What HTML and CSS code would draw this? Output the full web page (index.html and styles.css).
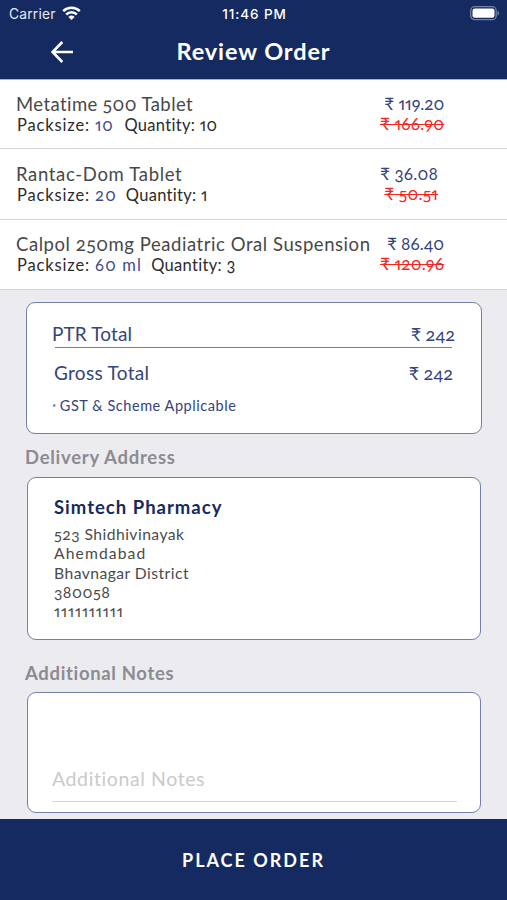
FILE: index.html
```html
<!DOCTYPE html>
<html lang="en">
<head>
<meta charset="utf-8">
<title>Review Order</title>
<link rel="stylesheet" href="styles.css">
</head>
<body>
<div class="screen">
  <header class="header">
    <div class="status">
      <div class="carrier"><span>Carrier</span>
        <svg class="wifi" width="19" height="15" viewBox="0 0 19 15" fill="none" stroke="#fff" stroke-width="2.5"><path d="M1.2 5.1a11.9 11.9 0 0 1 16.6 0M4.2 8.5a7.6 7.6 0 0 1 10.6 0"/><path d="M9.5 14 6.4 10.900a4.400 4.400 0 0 1 6.200 0Z" fill="#fff" stroke="none"/></svg>
      </div>
      <span class="time">11:46 PM</span>
      <svg class="battery" width="31" height="15" viewBox="0 0 31 15"><rect x="1.700" y=".7" width="25.500" height="13" rx="4" fill="none" stroke="#7681a3" stroke-width="1.3"/><rect x="3.500" y="2.600" width="22" height="9.200" rx="2.200" fill="#fff"/><path d="M28.500 5c2 .5 2 4 0 4.500Z" fill="#7681a3"/></svg>
    </div>
    <div class="navbar">
      <svg class="back" width="24" height="24" viewBox="0 0 24 24" fill="none" stroke="#fff" stroke-width="2.600"><path d="M12.300 2 2.600 12l9.700 10M2.600 12H23"/></svg>
      <h1>Review Order</h1>
    </div>
  </header>

  <main class="content">
    <section class="items">
      <article class="item first">
        <div class="info"><h2>Metatime 500 Tablet</h2>
          <p><span class="label">Packsize:</span><span class="pack tight">10</span><span class="qty">Quantity: 10</span></p></div>
        <div class="prices"><span class="now narrow">₹ 119.20</span><span class="was">₹ 166.90</span></div>
      </article>
      <article class="item second">
        <div class="info"><h2>Rantac-Dom Tablet</h2>
          <p><span class="label">Packsize:</span><span class="pack">20</span><span class="qty">Quantity: 1</span></p></div>
        <div class="prices"><span class="now">₹ 36.08</span><span class="was">₹ 50.51</span></div>
      </article>
      <article class="item">
        <div class="info"><h2>Calpol 250mg Peadiatric Oral Suspension</h2>
          <p><span class="label">Packsize:</span><span class="pack">60 ml</span><span class="qty">Quantity: 3</span></p></div>
        <div class="prices"><span class="now narrow">₹ 86.40</span><span class="was">₹ 120.96</span></div>
      </article>
    </section>

    <section class="card totals">
      <div class="line ptr"><span>PTR Total</span><span class="amount">₹ 242</span></div>
      <div class="line gross"><span>Gross Total</span><span class="amount">₹ 242</span></div>
      <p class="gst"><span class="star">*</span>GST &amp; Scheme Applicable</p>
    </section>

    <h3>Delivery Address</h3>
    <section class="card address">
      <h4>Simtech Pharmacy</h4>
      <p>523 Shidhivinayak</p>
      <p class="city">Ahemdabad</p>
      <p>Bhavnagar District</p>
      <p class="pin">380058</p>
      <p class="phone">1111111111</p>
    </section>

    <h3 class="notes-title">Additional Notes</h3>
    <section class="card notes"><div class="field">Additional Notes</div></section>
  </main>

  <button class="place">PLACE ORDER</button>
</div>
</body>
</html>
```
FILE: styles.css
```css
* { box-sizing: border-box; margin: 0; padding: 0; }
body { font-family: Lato, "Open Sans", sans-serif; font-variant-numeric: oldstyle-nums proportional-nums; font-variant-ligatures: none; background: #ebebf0; }
.screen { width: 507px; height: 900px; display: flex; flex-direction: column; overflow: hidden; }

.header { height: 80px; flex: none; background: #152a60; color: #fff; border-bottom: 1px solid #a3b3d6; }
.status { height: 28px; display: grid; grid-template-columns: 1fr auto 1fr; align-items: center; padding: 0 7px 0 9px; font-family: Inter, sans-serif; font-variant-numeric: normal; }
.carrier { display: flex; align-items: center; gap: 6px; font-size: 13.8px; color: #e6e9f2; letter-spacing: .2px; }
.wifi { margin-top: -2px; }
.time { font-size: 13.5px; font-weight: 500; letter-spacing: .9px; }
.battery { justify-self: end; margin-top: -1px; }
.navbar { height: 48px; display: grid; grid-template-columns: 1fr auto 1fr; align-items: center; }
.back { margin-left: 50px; }
h1 { font-size: 23.5px; line-height: 28px; font-weight: 700; letter-spacing: .9px; margin-top: -2px; }

.content { flex: 1; }
.items { background: #fff; }
.item { height: 70px; display: flex; padding-top: 13px; border-bottom: 1px solid #d4d4d8; }
.item.first { height: 69px; }
.item.second { height: 71px; padding-top: 14px; }
.info { width: 380px; flex: none; padding-left: 16px; }
h2 { font-size: 18.5px; line-height: 22px; font-weight: 400; letter-spacing: .56px; color: #484848; white-space: nowrap; }
.first h2 { letter-spacing: .42px; }
.second h2 { letter-spacing: .66px; }
.info p { display: flex; font-size: 16.5px; line-height: 21px; color: #2b2b2b; padding-left: 1px; }
.label { width: 78px; letter-spacing: .85px; }
.pack { color: #3c4c8c; letter-spacing: 1.2px; margin-right: 9px; }
.pack.tight { letter-spacing: .8px; margin-right: 11px; }
.qty { letter-spacing: .3px; }
.prices { display: flex; flex-direction: column; align-items: flex-end; align-self: flex-start; font-size: 17px; line-height: 20.5px; padding-top: .5px; }
.now { color: #34447c; letter-spacing: .2px; }
.now.narrow { letter-spacing: 0; }
.was { color: #f4261f; text-decoration: line-through; text-decoration-thickness: 1px; letter-spacing: .2px; }

.card { background: #fff; border: 1px solid #7480aa; border-radius: 9px; margin: 0 26px 0 27px; }
.totals { height: 132px; margin: 12px 25px 0 26px; padding: 17px 28px 0 25px; color: #34447c; }
.line { display: flex; justify-content: space-between; align-items: center; font-size: 19px; }
.ptr { height: 28px; position: relative; margin-right: -2px; letter-spacing: .12px; padding-bottom: 1px; }
.ptr::after { content: ""; position: absolute; left: 3px; right: 3px; bottom: 0; height: 1px; background: #6f7fab; }
.gross { height: 49px; padding: 0 0 0 2px; letter-spacing: .3px; }
.amount { font-size: 18px; letter-spacing: -.1px; }
.gst { font-size: 14.5px; line-height: 18px; letter-spacing: .55px; }
.star { font-size: 10px; margin-right: 3px; }

h3 { font-size: 18.5px; line-height: 24px; font-weight: 700; color: #8c8c90; letter-spacing: .73px; margin: 11px 0 8px 25px; }
.address { height: 163px; padding: 17px 26px 0; font-size: 15.7px; line-height: 19.300px; color: #4b4b4b; letter-spacing: .45px; }
h4 { font-size: 18.5px; line-height: 24px; font-weight: 700; letter-spacing: 1px; color: #152a60; margin-bottom: 6px; }
.city { letter-spacing: 1.1px; }
.pin { letter-spacing: .5px; }
.phone { letter-spacing: .9px; }
.notes-title { margin: 21px 0 7px 25px; letter-spacing: .66px; }
.notes { height: 121px; padding: 72px 23px 0 24px; }
.field { height: 37px; border-bottom: 1px solid #d6d6da; font-size: 19.5px; line-height: 27px; font-weight: 400; letter-spacing: .6px; color: #cacaca; }

.place { flex: none; height: 81px; border: 0; background: #152a60; color: #fff; font: 700 18px/24px Lato, sans-serif; letter-spacing: 2px; }
```
